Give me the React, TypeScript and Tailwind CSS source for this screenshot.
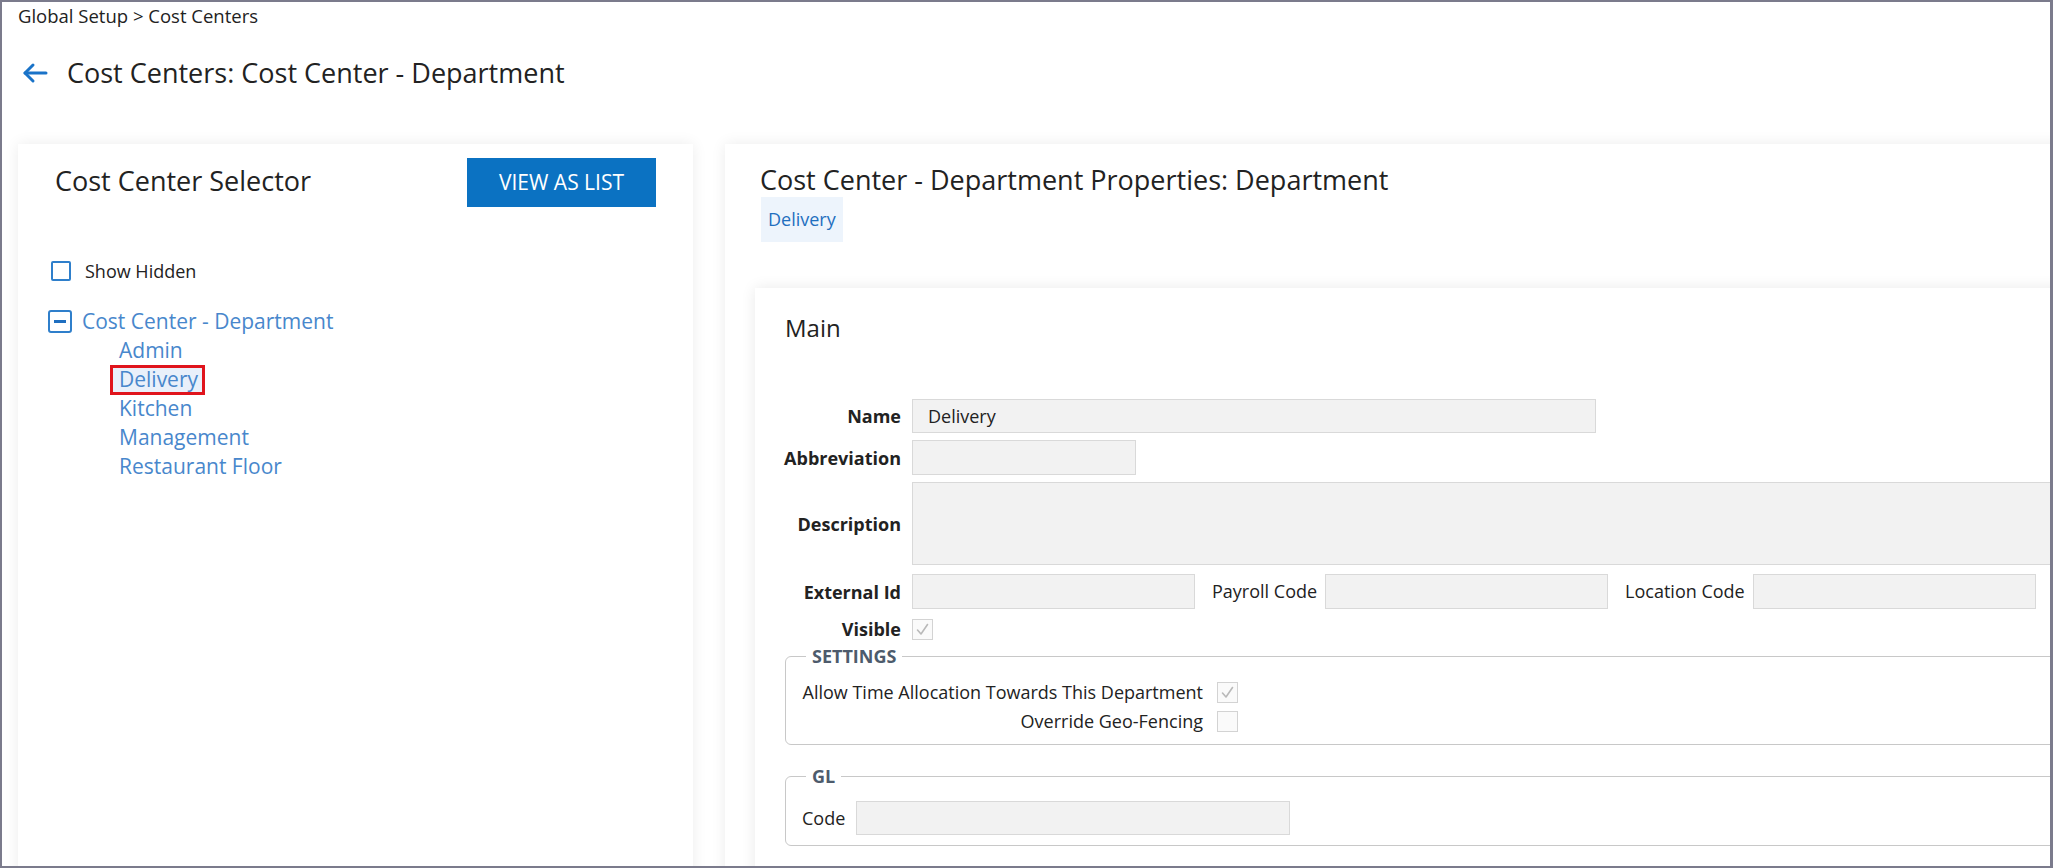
import React from 'react';

const BackArrow = () => (
  <svg width="26" height="22" viewBox="0 0 26 22" fill="none" stroke="#1a73c8" strokeWidth="3" strokeLinecap="round" strokeLinejoin="round">
    <path d="M24 11H3" />
    <path d="M11 3L3 11l8 8" />
  </svg>
);

const DisabledCheck = ({ checked }: { checked?: boolean }) => (
  <span className="w-[21px] h-[21px] shrink-0 border border-[#d3d3d3] bg-[#fafafa] flex items-center justify-center">
    {checked && (
      <svg width="15" height="15" viewBox="0 0 15 15" fill="none" stroke="#b9b9b9" strokeWidth="1.6" strokeLinecap="round" strokeLinejoin="round">
        <path d="M2.5 8l3.5 4 6.5-9.5" />
      </svg>
    )}
  </span>
);

const Field = ({ w, h = 'h-[35px]', value }: { w: string; h?: string; value?: string }) => (
  <div className={`${w} ${h} shrink-0 bg-[#f2f2f2] border border-[#d9d9d9] px-[15px] flex items-center text-[18px] text-[#222]`}>
    {value}
  </div>
);

const Label = ({ children }: { children: React.ReactNode }) => (
  <label className="w-[116px] shrink-0 flex justify-end font-bold whitespace-nowrap leading-[24px]">{children}</label>
);

const children = ['Admin', 'Delivery', 'Kitchen', 'Management', 'Restaurant Floor'];

export default function App() {
  return (
    <div className="w-[2053px] h-[868px] overflow-hidden bg-white border-[2px] border-r-[3px] border-[#7b7b8c] font-['Open_Sans',sans-serif] text-[#222]">
      {/* breadcrumb + title */}
      <div className="pl-[16px] pt-[2px] text-[18.5px] leading-[24px]">Global Setup &gt; Cost Centers</div>
      <div className="mt-[27px] pl-[20px] flex items-center gap-[19px] h-[36px]">
        <BackArrow />
        <h1 className="text-[27px] leading-[36px] text-[#222]">Cost Centers: Cost Center - Department</h1>
      </div>

      <div className="mt-[53px] pl-[16px] flex gap-[32px]">
        {/* left: selector */}
        <div className="w-[675px] h-[760px] shrink-0 bg-white shadow-[0_0_14px_rgba(0,0,0,0.08)] px-[37px] pt-[14px]">
          <div className="flex items-center justify-between">
            <h2 className="text-[27px] leading-[36px] -mt-[3px]">Cost Center Selector</h2>
            <button className="w-[189px] h-[49px] bg-[#0b72c2] text-white text-[21px] uppercase">View as list</button>
          </div>

          <div className="ml-[-4px] mt-[52px] flex items-center gap-[14px] h-[24px]">
            <span className="w-[20px] h-[20px] border-[2px] border-[#2f7fcb] rounded-[2px]" />
            <span className="text-[18px] leading-[24px]">Show Hidden</span>
          </div>

          <div className="ml-[-7px] mt-[24px]">
            <div className="flex items-center gap-[10px] h-[28px]">
              <span className="w-[24px] h-[23px] border-[2px] border-[#2f7fcb] rounded-[3px] flex items-center justify-center">
                <span className="w-[12px] h-[3px] bg-[#1f6fc0]" />
              </span>
              <span className="text-[21px] leading-[28px] text-[#4887cc]">Cost Center - Department</span>
            </div>
            <ul className="mt-[1px] pl-[71px] text-[21px] leading-[29px] text-[#4887cc]">
              {children.map(c => (
                <li key={c}>
                  {c === 'Delivery' ? (
                    <span className="relative inline-block">
                      <span className="absolute -left-[9px] -right-[7px] top-0 bottom-[-1px] bg-[#e9f0fa] border-[3px] border-[#e0141c]" />
                      <span className="relative">{c}</span>
                    </span>
                  ) : c}
                </li>
              ))}
            </ul>
          </div>
        </div>

        {/* right: properties */}
        <div className="w-[1400px] h-[760px] shrink-0 bg-white shadow-[0_0_14px_rgba(0,0,0,0.08)] pt-[18px]">
          <h2 className="pl-[35px] text-[27px] leading-[36px]">Cost Center - Department Properties: Department</h2>
          <div className="ml-[36px] -mt-[1px] inline-flex items-center h-[45px] px-[7px] bg-[#edf4fc] text-[18px] text-[#1f6fbf]">Delivery</div>

          <div className="ml-[30px] mt-[46px] h-[620px] bg-white shadow-[0_0_14px_rgba(0,0,0,0.09)] px-[30px] pt-[24px]">
            <h3 className="text-[24px] leading-[32px]">Main</h3>

            <div className="mt-[55px] flex flex-col text-[18px]">
              <div className="flex items-center gap-[11px]">
                <Label>Name</Label>
                <Field w="w-[684px]" h="h-[34px]" value="Delivery" />
              </div>
              <div className="mt-[7px] flex items-center gap-[11px]">
                <Label>Abbreviation</Label>
                <Field w="w-[224px]" />
              </div>
              <div className="mt-[7px] flex items-center gap-[11px]">
                <Label>Description</Label>
                <Field w="w-[1300px]" h="h-[83px]" />
              </div>
              <div className="mt-[9px] flex items-center">
                <span className="mr-[11px] flex"><Label>External Id</Label></span>
                <Field w="w-[283px]" />
                <span className="ml-[17px] mr-[8px] whitespace-nowrap">Payroll Code</span>
                <Field w="w-[283px]" />
                <span className="ml-[17px] mr-[8px] whitespace-nowrap">Location Code</span>
                <Field w="w-[283px]" />
              </div>
              <div className="mt-[8px] flex items-center gap-[11px]">
                <Label>Visible</Label>
                <DisabledCheck checked />
              </div>
            </div>

            <fieldset className="mt-[3px] w-[1400px] border border-[#c8c8c8] rounded-[6px] pl-[16px] pb-[8px]">
              <legend className="ml-[4px] px-[6px] text-[18px] leading-[24px] font-bold text-[#4d5b6c]">SETTINGS</legend>
              <div className="mt-[10px] flex flex-col text-[18px]">
                <div className="flex items-center h-[29px] gap-[14px]">
                  <span className="w-[401px] flex justify-end whitespace-nowrap">Allow Time Allocation Towards This Department</span>
                  <DisabledCheck checked />
                </div>
                <div className="flex items-center h-[29px] gap-[14px]">
                  <span className="w-[401px] flex justify-end whitespace-nowrap">Override Geo-Fencing</span>
                  <DisabledCheck />
                </div>
              </div>
            </fieldset>

            <fieldset className="mt-[19px] w-[1400px] border border-[#c8c8c8] rounded-[6px] pl-[16px] pb-[10px]">
              <legend className="ml-[4px] px-[6px] text-[18px] leading-[24px] font-bold text-[#4d5b6c]">GL</legend>
              <div className="mt-[13px] flex items-center gap-[11px] text-[18px]">
                <span>Code</span>
                <Field w="w-[434px]" h="h-[34px]" />
              </div>
            </fieldset>
          </div>
        </div>
      </div>
    </div>
  );
}
